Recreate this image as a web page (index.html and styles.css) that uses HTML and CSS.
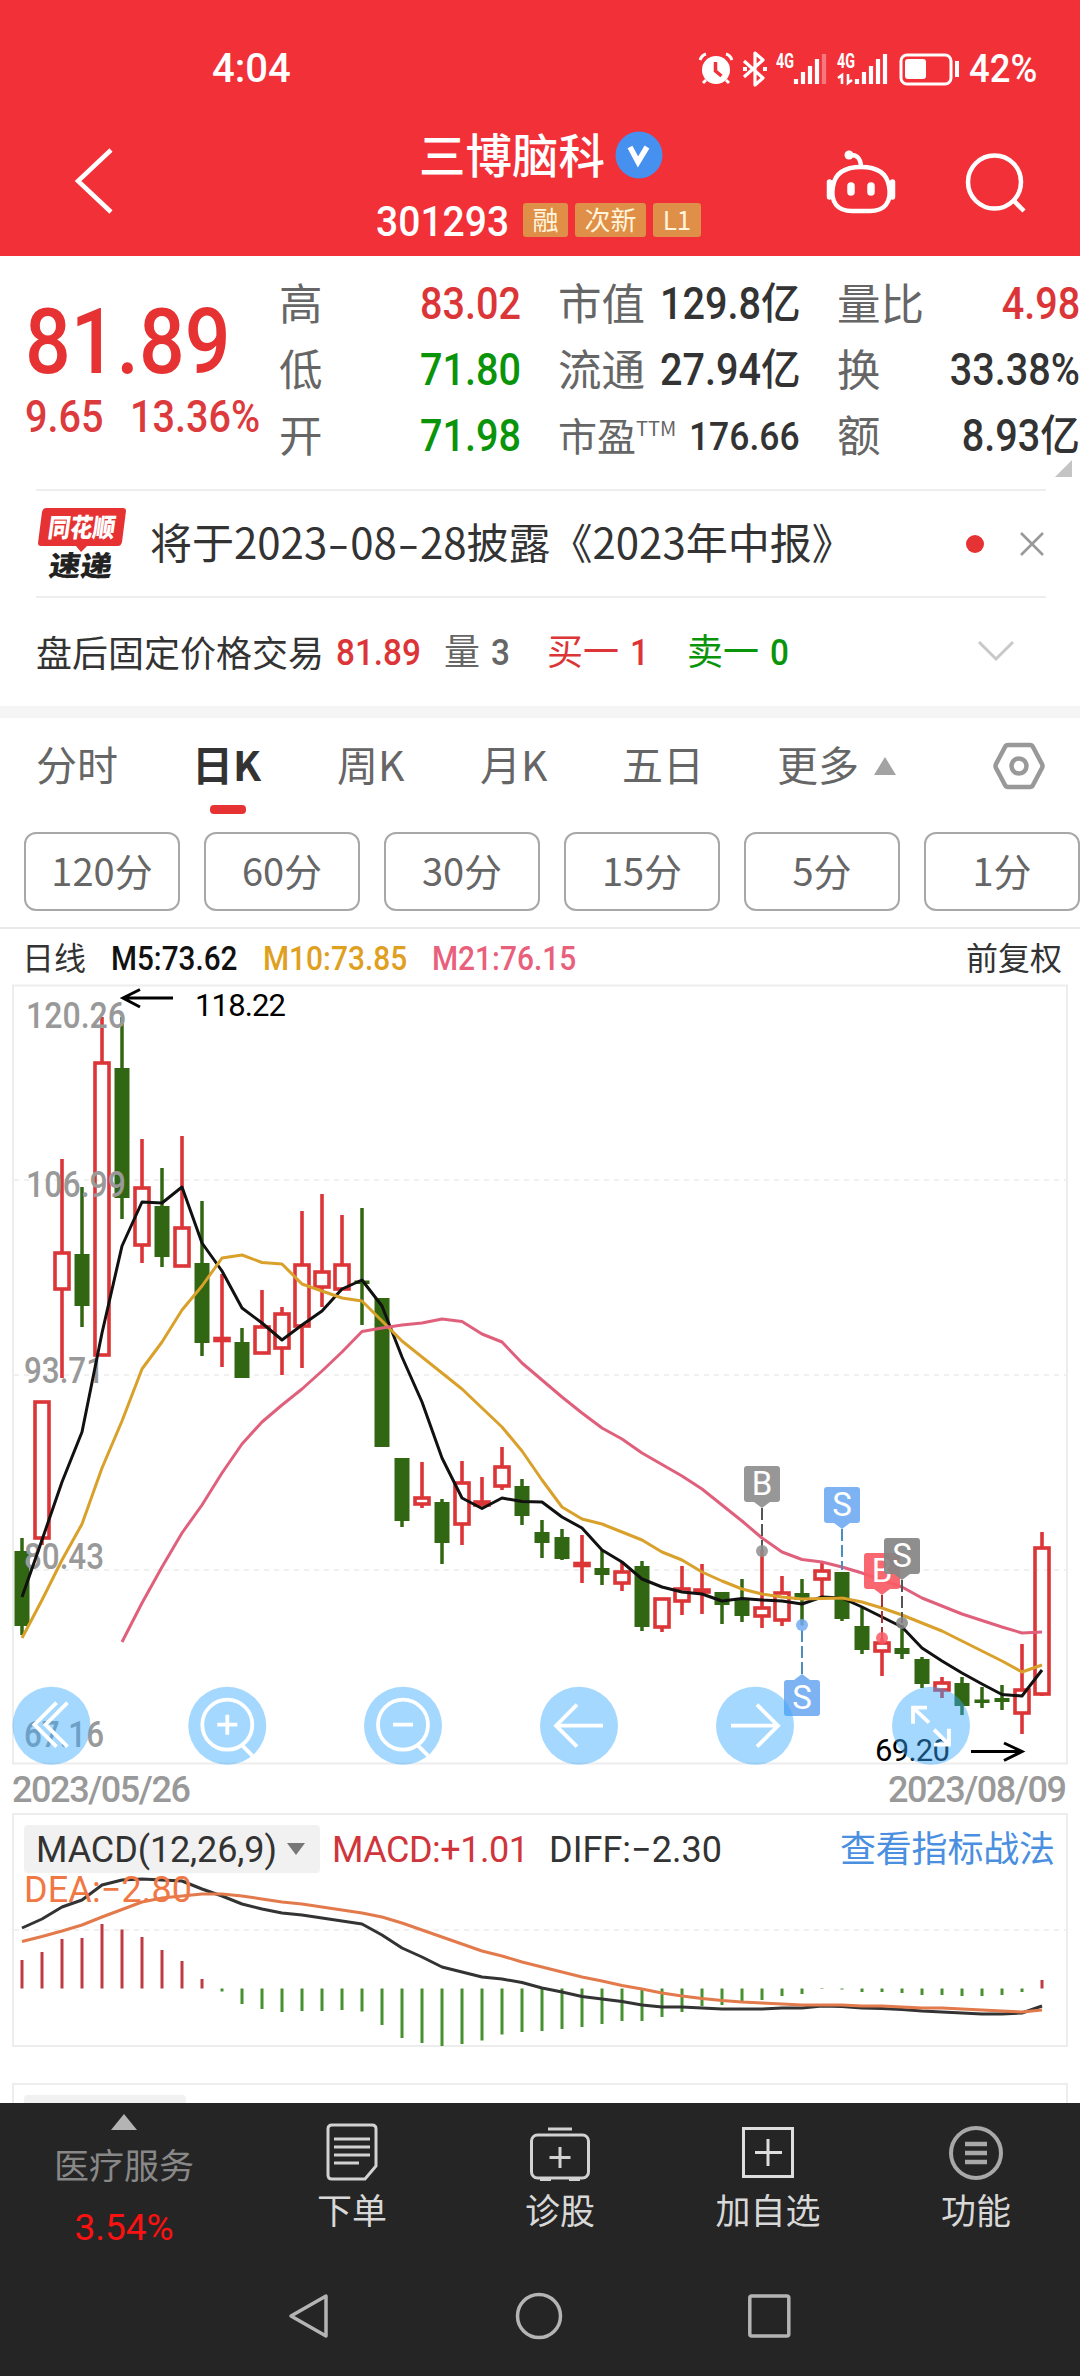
FILE: index.html
```
<!DOCTYPE html>
<html lang="zh-CN">
<head>
    <meta charset="UTF-8">
    <meta name="viewport" content="width=device-width, initial-scale=1.0">
    <title>三博脑科 301293</title>
    <link rel="stylesheet" href="styles.css">
</head>
<body>
    <header class="header">
        <div class="status-bar">
            <span class="clock num">4:04</span>
            <svg class="status-icons" width="262" height="36" viewBox="698 50 262 36" fill="none" stroke="#fff">
                <!-- alarm -->
                <circle cx="716" cy="69" r="14" fill="#fff" stroke="none"/>
                <path d="M715.500 61v9l6 5" stroke="#f13038" stroke-width="3.500"/>
                <path d="M700 59q2-5 6-6M732 59q-2-5-6-6M706 79l-3 3M726 79l3 3" stroke-width="3"/>
                <!-- bluetooth -->
                <path d="M744 60l19 17-8 7V52l8 7-19 17" stroke-width="3.200" stroke-linejoin="round"/>
                <path d="M743 68h4M763 68h4" stroke-width="4"/>
                <!-- signal 1 -->
                <text class="net" x="776" y="67" textLength="18" lengthAdjust="spacingAndGlyphs">4G</text>
                <path d="M796 78v5M803 71v12M810 65v18M817 58v25" stroke-width="4.200"/>
                <path d="M824 53v30" stroke-width="4.200" opacity=".35"/>
                <!-- signal 2 -->
                <text class="net" x="837" y="67" textLength="18" lengthAdjust="spacingAndGlyphs">4G</text>
                <path d="M838 77l4-3v9M848 73v9l4-3" stroke-width="2.600"/>
                <path d="M857 78v5M864 71v12M871 65v18M878 58v25M885 53v30" stroke-width="4.200"/>
                <!-- battery -->
                <rect x="901" y="54" width="50" height="29" rx="6" stroke-width="3"/>
                <rect x="905" y="58" width="21" height="20" rx="3" fill="#fff" stroke="none"/>
                <path d="M957 60v16" stroke-width="4"/>
            </svg>
            <span class="battery-text num">42%</span>
        </div>
        <div class="title-bar">
            <svg class="back" width="46" height="72" viewBox="0 0 46 72" fill="none" stroke="#fff" stroke-width="4.500">
                <path d="M41 5L8 36l33 31"/>
            </svg>
            <div class="title">
                <div class="title-name">
                    <span>三博脑科</span>
                    <svg width="48" height="48" viewBox="0 0 48 48">
                        <circle cx="24" cy="24" r="23.500" fill="#4690f0"/>
                        <path d="M15 16l8 15 9-15" fill="none" stroke="#fff" stroke-width="5.500"/>
                    </svg>
                </div>
                <div class="title-code">
                    <span class="code"><span class="num">301293</span></span>
                    <span class="tag tag-1">融</span>
                    <span class="tag tag-2">次新</span>
                    <span class="tag tag-3">L1</span>
                </div>
            </div>
            <svg class="robot" width="74" height="70" viewBox="824 147 74 70" fill="none" stroke="#fff" stroke-width="4.500">
                <path d="M861 166q-1-12-11-11"/>
                <circle cx="849" cy="155" r="4.500" fill="#fff" stroke="none"/>
                <path d="M861 167c17 0 26 7 28 19 3 17-5 25-19 25h-18c-14 0-22-8-19-25 2-12 11-19 28-19z"/>
                <path d="M829.500 182v15M892.500 182v15" stroke-width="5.500" stroke-linecap="round"/>
                <path d="M851 186v6M871 186v6" stroke-width="7.500" stroke-linecap="round"/>
            </svg>
            <svg class="search" width="66" height="66" viewBox="963 150 66 66" fill="none" stroke="#fff" stroke-width="4.500">
                <circle cx="994.500" cy="182" r="26.500"/>
                <path d="M1013 200l11 11"/>
            </svg>
        </div>
    </header>

    <section class="quote">
        <div class="price">
            <div class="price-now num">81.89</div>
            <div class="price-change"><span class="num">9.65</span><span class="num">13.36%</span></div>
        </div>
        <div class="stats">
            <div class="stat"><label>高</label><b class="num up">83.02</b></div>
            <div class="stat"><label>市值</label><b class="num">129.8亿</b></div>
            <div class="stat"><label>量比</label><b class="num up">4.98</b></div>
            <div class="stat"><label>低</label><b class="num down">71.80</b></div>
            <div class="stat"><label>流通</label><b class="num">27.94亿</b></div>
            <div class="stat"><label>换</label><b class="num">33.38%</b></div>
            <div class="stat"><label>开</label><b class="num down">71.98</b></div>
            <div class="stat stat-small"><label>市盈<sup>TTM</sup></label><b class="num">176.66</b></div>
            <div class="stat"><label>额</label><b class="num">8.93亿</b></div>
        </div>
        <i class="corner"></i>
    </section>

    <section class="news">
        <svg class="news-logo" width="92" height="76" viewBox="35 505 92 76">
            <path d="M45 507h77q3 0 3 3l-4 31q-1 4-4 4H86l-6 6-5-6H40q-3 0-3-3l4-31q1-4 4-4z" fill="#e63232"/>
            <text class="logo-top" transform="translate(46 536) skewX(-8)" textLength="67" lengthAdjust="spacingAndGlyphs">同花顺</text>
            <text class="logo-bottom" transform="translate(47 575) skewX(-8)" textLength="63" lengthAdjust="spacingAndGlyphs">速递</text>
        </svg>
        <p>将于2023<i>-</i>08<i>-</i>28披露《2023年中报》</p>
        <span class="dot"></span>
        <svg class="close" width="26" height="26" viewBox="0 0 26 26" stroke="#999" stroke-width="2.600"><path d="M2 2l22 22M24 2L2 24"/></svg>
    </section>

    <section class="after-hours">
        <span class="ah-name">盘后固定价格交易</span>
        <span class="ah-price up"><b class="num">81.89</b></span>
        <span class="ah-vol muted">量<b class="num">3</b></span>
        <span class="ah-buy up">买一<b class="num">1</b></span>
        <span class="ah-sell down">卖一<b class="num">0</b></span>
        <svg class="chevron" width="38" height="22" viewBox="0 0 38 22" fill="none" stroke="#c8c8c8" stroke-width="3"><path d="M2 2l17 17L36 2"/></svg>
    </section>

    <nav class="tabs">
        <a class="tab">分时</a>
        <a class="tab active">日K</a>
        <a class="tab">周K</a>
        <a class="tab">月K</a>
        <a class="tab">五日</a>
        <a class="tab">更多</a>
        <svg class="more" width="24" height="20" viewBox="0 0 24 20"><path d="M12 1l11 18H1z" fill="#a3a3a3"/></svg>
        <svg class="settings" width="52" height="50" viewBox="0 0 52 50" fill="none" stroke="#999" stroke-width="4.500">
            <path d="M15 4h22q2 0 3 2l9 17q1 2 0 4l-9 17q-1 2-3 2H15q-2 0-3-2L3 27q-1-2 0-4L12 6q1-2 3-2z"/>
            <circle cx="26" cy="25" r="7.500"/>
        </svg>
    </nav>

    <div class="periods">
        <button>120分</button>
        <button>60分</button>
        <button>30分</button>
        <button>15分</button>
        <button>5分</button>
        <button>1分</button>
    </div>

    <div class="ma-legend">
        <span class="ma-name">日线</span>
        <span class="ma-5"><b class="num">M5:73.62</b></span>
        <span class="ma-10"><b class="num">M10:73.85</b></span>
        <span class="ma-21"><b class="num">M21:76.15</b></span>
        <span class="adjust">前复权</span>
    </div>

    <svg class="kline" id="kline" width="1080" height="828" viewBox="0 984 1080 828">
        <rect class="frame" x="13" y="985.500" width="1054" height="778"/>
        <path class="grid" d="M14 1180H1066M14 1375H1066M14 1570H1066"/>
        <g id="candles"></g>
        <g class="axis">
            <text x="26" y="1028" textLength="100" lengthAdjust="spacingAndGlyphs">120.26</text>
            <text x="26" y="1197" textLength="100" lengthAdjust="spacingAndGlyphs">106.99</text>
            <text x="24" y="1383" textLength="80" lengthAdjust="spacingAndGlyphs">93.71</text>
            <text x="24" y="1569" textLength="80" lengthAdjust="spacingAndGlyphs">80.43</text>
            <text x="24" y="1747" textLength="80" lengthAdjust="spacingAndGlyphs">67.16</text>
        </g>
        <g id="averages"></g>
        <g class="extreme">
            <path d="M173 998H124M140 989.500L123 998l17 9"/>
            <text x="195" y="1016" textLength="91">118.22</text>
            <path d="M971 1751.500h50M1004 1743l18 8.500-18 9"/>
            <text x="875" y="1761" textLength="75">69.20</text>
        </g>
        <g id="signals"></g>
        <g class="tools">
            <g transform="translate(51.5 1725.7)"><circle r="39"/><path d="M5-23l-22 22 22 22M16-23L-6-1l22 22"/></g>
            <g transform="translate(227.3 1725.7)"><circle r="39"/><path d="M-10-1h20M0-11v20M15 20l10 10"/><circle class="lens" cy="-1" r="25"/></g>
            <g transform="translate(403 1725.7)"><circle r="39"/><path d="M-10-1h20M15 20l10 10"/><circle class="lens" cy="-1" r="25"/></g>
            <g transform="translate(579 1725.7)"><circle r="39"/><path d="M24 0h-47M-2-21L-23 0l21 21"/></g>
            <g transform="translate(755 1725.7)"><circle r="39"/><path d="M-24 0h47M2-21L23 0 2 21"/></g>
            <g transform="translate(931 1725.7)"><circle r="39"/><path d="M-2-3l-16-15M-18-2v-16h14M3 4l15 15M18 3v16H3"/></g>
        </g>
        <g class="axis">
            <text x="12" y="1802" textLength="179">2023/05/26</text>
            <text x="888" y="1802" textLength="179">2023/08/09</text>
        </g>
    </svg>

    <svg class="macd" id="macd" width="1080" height="291" viewBox="0 1812 1080 291">
        <rect class="frame" x="13" y="1814" width="1054" height="232"/>
        <path class="grid" d="M14 1930H1066"/>
        <rect class="chip" x="24" y="1825" width="296" height="48" rx="4"/>
        <path d="M287 1843h18l-9 12z" fill="#777"/>
        <g id="macd-bars"></g>
        <g id="macd-lines"></g>
        <g class="macd-text">
            <text x="36" y="1862" textLength="241" fill="#333">MACD(12,26,9)</text>
            <text x="332" y="1862" textLength="197" fill="#d0353c">MACD:+1.01</text>
            <text x="549" y="1862" textLength="173" fill="#333">DIFF:−2.30</text>
            <text x="24" y="1902" textLength="168" fill="#f07845">DEA:−2.80</text>
            <text class="link" x="840" y="1862" textLength="215">查看指标战法</text>
        </g>
        <rect class="frame" x="13" y="2084" width="1054" height="60"/>
        <rect class="chip" x="24" y="2095" width="162" height="48" rx="4"/>
    </svg>

    <footer class="footer">
        <div class="actions">
            <div class="sector">
                <svg width="26" height="16" viewBox="0 0 26 16"><path d="M13 0l13 16H0z" fill="#b4b4b4"/></svg>
                <span>医疗服务</span>
                <b class="num">3.54%</b>
            </div>
            <div class="action">
                <svg width="60" height="60" viewBox="0 0 60 60" fill="none" stroke="#d2d2d2" stroke-width="3">
                    <path d="M10 3h40q4 0 4 4v37L43 57H10q-4 0-4-4V7q0-4 4-4z"/>
                    <path d="M12 17h36M12 25h36M12 33h36M12 41h25"/>
                </svg>
                <span>下单</span>
            </div>
            <div class="action">
                <svg width="64" height="60" viewBox="0 0 64 60" fill="none" stroke="#d2d2d2" stroke-width="3">
                    <rect x="3.500" y="13" width="57" height="43" rx="6"/>
                    <path d="M20 7h24M12 57.500h11M41 57.500h11M32 25v21M21.500 35.500h21"/>
                </svg>
                <span>诊股</span>
            </div>
            <div class="action">
                <svg width="60" height="60" viewBox="0 0 60 60" fill="none" stroke="#dedede" stroke-width="3">
                    <rect x="5.500" y="6.500" width="49" height="48"/>
                    <path d="M30 17v27M17 30.500h27"/>
                </svg>
                <span>加自选</span>
            </div>
            <div class="action">
                <svg width="60" height="60" viewBox="0 0 60 60" fill="none" stroke="#a8a8a8" stroke-width="4">
                    <circle cx="30" cy="31" r="25"/>
                    <path d="M19 22h22M19 31h22M19 40h22" stroke-width="4.500"/>
                </svg>
                <span>功能</span>
            </div>
        </div>
        <div class="sysnav">
            <svg width="44" height="48" viewBox="0 0 44 48"><path d="M40 4v40L5 24z"/></svg>
            <svg width="48" height="48" viewBox="0 0 48 48"><circle cx="24" cy="24" r="21.500"/></svg>
            <svg width="44" height="48" viewBox="0 0 44 48"><rect x="1.800" y="4" width="39" height="40" rx="2"/></svg>
        </div>
    </footer>

    <script src="chart.js"></script>
</body>
</html>
```
FILE: styles.css
```
* {
    box-sizing: border-box;
}

body {
    margin: 0;
    width: 1080px;
    height: 2376px;
    overflow: hidden;
    background: #fff;
    color: #333;
    font-family: 'Noto Sans CJK SC', sans-serif;
    line-height: 1;
}

p {
    margin: 0;
}

svg {
    display: block;
    flex-shrink: 0;
}

/* narrow figures */
.num {
    display: inline-block;
    font-family: Roboto, 'Noto Sans CJK SC', sans-serif;
    font-weight: 500;
    transform: scaleX(.9);
    transform-origin: left;
}

.up {
    color: #dc3538;
}

.down {
    color: #0a940a;
}

.muted {
    color: #666;
}

/* header */

.header {
    height: 256px;
    background: #f13038;
    color: #fff;
}

.status-bar {
    display: flex;
    align-items: center;
    height: 120px;
    padding-top: 18px;
}

.clock {
    width: 486px;
    margin-left: 212px;
    font-size: 40px;
    transform: none;
}

.net {
    fill: #fff;
    stroke: none;
    font: 700 20px Roboto, sans-serif;
}

.battery-text {
    margin-left: 9px;
    font-size: 38px;
    white-space: nowrap;
    transform: scaleX(.96);
}

.title-bar {
    display: flex;
    height: 136px;
}

.back {
    margin: 25px 0 0 70px;
}

.title {
    width: 390px;
    margin-left: 260px;
}

.title-name {
    display: flex;
    align-items: center;
    gap: 10px;
    height: 70px;
    padding-left: 43px;
    font-size: 46.5px;
    font-weight: 500;
}

.title-name span {
    margin-top: -4px;
}

.title-code {
    display: flex;
    align-items: center;
    height: 60px;
}

.code {
    width: 147px;
    font-size: 42px;
}

.code .num {
    transform: scaleX(.93);
}

.tag {
    height: 34px;
    margin-right: 7px;
    border-radius: 3px;
    background: #df8f47;
    color: #fff5dc;
    font-size: 26px;
    line-height: 31px;
    text-align: center;
}

.tag-1 {
    width: 45px;
}

.tag-2 {
    width: 71px;
}

.tag-3 {
    width: 48px;
}

.robot {
    margin: 27px 0 0 58px;
}

.search {
    margin: 30px 0 0 65px;
}

/* quote */

.quote {
    position: relative;
    display: flex;
    height: 233px;
}

.price {
    width: 281px;
    padding: 41px 0 0 25px;
    color: #e63232;
}

.price-now {
    height: 91px;
    font-size: 91px;
    transform: scaleX(.885);
}

.price-change {
    display: flex;
    margin-top: 7px;
    color: #dc3a3c;
    font-size: 44px;
    white-space: nowrap;
}

.price-change .num:first-child {
    width: 105px;
}

.stats {
    display: grid;
    grid-template-columns: 240px 240px 241px;
    grid-auto-rows: 66px;
    column-gap: 39px;
    padding-top: 16px;
}

.stat {
    display: flex;
    align-items: center;
    justify-content: space-between;
    font-size: 43.5px;
    white-space: nowrap;
}

.stat label {
    margin: -6px 0 0 -2px;
    color: #666;
}

.stat .num {
    transform: scaleX(.91);
    transform-origin: right;
}

.stat-small {
    font-size: 39px;
}

.stat sup {
    font-size: 20px;
    vertical-align: 15px;
}

.corner {
    position: absolute;
    right: 8px;
    bottom: 12px;
    border-bottom: 17px solid #c4c4c4;
    border-left: 17px solid transparent;
}

/* news */

.news {
    display: flex;
    align-items: center;
    height: 109px;
    margin: 0 34px 0 36px;
    border-top: 2px solid #eee;
    border-bottom: 2px solid #eee;
}

.news-logo {
    overflow: visible;
}

.logo-top {
    fill: #fff;
    font-size: 26px;
    font-weight: 900;
}

.logo-bottom {
    fill: #222;
    font-size: 28px;
    font-weight: 900;
}

.news p {
    width: 812px;
    margin: -5px 0 0 22px;
    flex-shrink: 0;
    font-size: 42px;
    white-space: nowrap;
}

.news p i {
    display: inline-block;
    width: 23px;
    font-style: normal;
    text-align: center;
    transform: scaleX(1.5);
}

.dot {
    width: 18px;
    height: 18px;
    margin-left: 4px;
    flex-shrink: 0;
    border-radius: 50%;
    background: #e63232;
}

.close {
    margin-left: 35px;
}

/* after-hours */

.after-hours {
    display: flex;
    align-items: center;
    height: 120px;
    padding: 0 0 3px 36px;
    border-bottom: 12px solid #f5f5f5;
    font-size: 36px;
    white-space: nowrap;
}

.after-hours span {
    flex-shrink: 0;
}

.after-hours .num {
    font-size: 37px;
}

.ah-name {
    width: 300px;
}

.ah-price {
    width: 108px;
}

.ah-vol {
    width: 103px;
}

.ah-vol .num {
    margin-left: 11px;
}

.ah-buy,
.ah-sell {
    width: 140px;
}

.ah-buy .num,
.ah-sell .num {
    margin-left: 11px;
}

.chevron {
    margin-left: 150px;
}

/* tabs */

.tabs {
    display: flex;
    align-items: center;
    height: 96px;
    padding-left: 36px;
    color: #666;
    font-size: 41px;
}

.tab {
    position: relative;
    top: -3px;
    width: 82px;
    margin-right: 63px;
    flex-shrink: 0;
    white-space: nowrap;
}

.tab:nth-child(1) {
    margin-right: 74px;
}

.tab:nth-child(2) {
    margin-right: 79px;
}

.tab:nth-child(3) {
    margin-right: 61px;
}

.tab:nth-child(4) {
    margin-right: 60px;
}

.tab:nth-child(5) {
    margin-right: 73px;
}

.tab:nth-child(6) {
    margin-right: 14px;
}

.tab.active {
    width: 66px;
    color: #333;
    font-weight: 700;
}

.tab.active::after {
    content: '';
    position: absolute;
    left: 18px;
    bottom: -30px;
    width: 36px;
    height: 9px;
    border-radius: 4px;
    background: #e63232;
}

.settings {
    margin-left: 96px;
}

/* periods */

.periods {
    display: flex;
    gap: 24px;
    height: 115px;
    padding: 18px 0 0 24px;
    border-bottom: 2px solid #e8e8e8;
}

.periods button {
    width: 156px;
    height: 79px;
    flex-shrink: 0;
    padding: 0 0 5px;
    border: 2px solid #a8a8a8;
    border-radius: 12px;
    background: #fff;
    color: #666;
    font-family: inherit;
    font-size: 38px;
}

/* moving averages */

.ma-legend {
    display: flex;
    align-items: center;
    height: 55px;
    padding: 2px 18px 0 22px;
    font-size: 33px;
    white-space: nowrap;
}

.ma-name,
.adjust {
    margin-top: -4px;
    font-size: 32px;
}

.ma-5 {
    width: 152px;
    margin-left: 25px;
    color: #111;
}

.ma-10 {
    width: 169px;
    color: #dfa01f;
}

.ma-21 {
    color: #e8607c;
}

.ma-10 .num,
.ma-21 .num {
    transform: scaleX(.905);
}

.adjust {
    margin-left: auto;
}

.frame {
    fill: none;
    stroke: #ededed;
    stroke-width: 2;
}

.grid {
    stroke: #ececec;
    stroke-width: 1.5;
    stroke-dasharray: 5 5;
}

.axis text {
    fill: #999;
    font: 500 36px Roboto, sans-serif;
}

.bar {
    stroke-width: 3;
}

.candle-up {
    fill: none;
    stroke: #dc3538;
    stroke-width: 3.6;
}

.candle-down {
    fill: #316613;
    stroke: #316613;
    stroke-width: 3;
}

.line {
    fill: none;
    stroke-width: 3;
    stroke-linejoin: round;
}

.extreme path {
    fill: none;
    stroke: #000;
    stroke-width: 3;
}

.extreme text {
    font: 400 31px Roboto, sans-serif;
}

.signal text {
    fill: #fff;
    font: 400 33px Roboto, sans-serif;
    text-anchor: middle;
}

.tools circle {
    fill: rgba(55, 168, 253, .45);
}

.tools path,
.tools .lens {
    fill: none;
    stroke: #fff;
    stroke-width: 3.8;
}

/* macd */

.chip {
    fill: #f1f1f1;
}

.macd-text text {
    font: 400 36px Roboto, sans-serif;
}

.macd-text .link {
    fill: #4a8fe0;
    font: 400 36px 'Noto Sans CJK SC', sans-serif;
}

/* footer */

.footer {
    position: relative;
    height: 273px;
    background: #252525;
    color: #d8d8d8;
    font-size: 35px;
}

.actions {
    display: flex;
    height: 172px;
}

.sector {
    display: flex;
    flex-direction: column;
    align-items: center;
    width: 248px;
    padding-top: 11px;
    color: #888;
}

.sector span {
    margin-top: 16px;
}

.sector b {
    margin-top: 28px;
    color: #fa1111;
    font-size: 37px;
    font-weight: 400;
    transform: none;
}

.action {
    display: flex;
    flex-direction: column;
    align-items: center;
    width: 208px;
    padding-top: 19px;
}

.action span {
    margin-top: 9px;
}

.sysnav {
    display: flex;
    height: 101px;
    padding: 17px 0 0 286px;
    fill: none;
    stroke: #b4b4b4;
    stroke-width: 3.5;
    stroke-linejoin: round;
}

.sysnav svg {
    margin-right: 185px;
}
```
FILE: chart.js
```
const STEP = 20;
const LEFT = 22;
const x = i => LEFT + i * STEP;

// [direction, high, body top, body bottom, low]
const candles = [
    ['d', 1538, 1551, 1626, 1635], ['u', 1402, 1402, 1538, 1545], ['u', 1159, 1253, 1289, 1378],
    ['d', 1187, 1254, 1306, 1327], ['u', 1017, 1063, 1355, 1355], ['d', 1017, 1068, 1198, 1219],
    ['u', 1139, 1188, 1245, 1263], ['d', 1168, 1206, 1257, 1267], ['u', 1136, 1228, 1266, 1266],
    ['d', 1201, 1263, 1343, 1356], ['u', 1274, 1338.5, 1340.5, 1367], ['d', 1328, 1342, 1378, 1378],
    ['u', 1290, 1327, 1353, 1353], ['u', 1307, 1314, 1348, 1375], ['u', 1211, 1265, 1326, 1368],
    ['u', 1194, 1272, 1287, 1307], ['u', 1215, 1265, 1289, 1289], ['d', 1208, 1281, 1283, 1325],
    ['d', 1298, 1298, 1447, 1447], ['d', 1458, 1458, 1521, 1527], ['u', 1462, 1498, 1504, 1508],
    ['d', 1499, 1502, 1543, 1564], ['u', 1461, 1483, 1524, 1545], ['u', 1477, 1502, 1505, 1505],
    ['u', 1447, 1467, 1486, 1490], ['d', 1479, 1486, 1516, 1525], ['d', 1520, 1532, 1543, 1558],
    ['d', 1529, 1537, 1559, 1560], ['u', 1535, 1563.5, 1565.5, 1583], ['d', 1550, 1568, 1575, 1585],
    ['u', 1562, 1572, 1583, 1591], ['d', 1561, 1566, 1627, 1631], ['u', 1599, 1599, 1627, 1632],
    ['u', 1566, 1589, 1601, 1615], ['u', 1564, 1590, 1592, 1614], ['d', 1592, 1592, 1605, 1624],
    ['d', 1579, 1599, 1616, 1622], ['u', 1550, 1608, 1616, 1628], ['u', 1576, 1593, 1620, 1626],
    ['d', 1579, 1593, 1600, 1625], ['u', 1561, 1571, 1579, 1596], ['d', 1572, 1572, 1619, 1621],
    ['d', 1608, 1626, 1650, 1654], ['u', 1638, 1643, 1651, 1676], ['d', 1625, 1648, 1654, 1659],
    ['d', 1657, 1659, 1684, 1688], ['u', 1677, 1683, 1690, 1698], ['d', 1677, 1683, 1706, 1715],
    ['d', 1687, 1700, 1702, 1708], ['d', 1685, 1698, 1702, 1710], ['u', 1644, 1690, 1713, 1734],
    ['u', 1532, 1548, 1694, 1696]
];

const ma5 = [1597, 1540, 1482, 1432, 1333, 1246, 1202, 1203, 1187, 1243, 1271, 1308, 1323, 1340, 1325, 1311, 1289, 1280,
    1306, 1357, 1402, 1458, 1498, 1508.5, 1498, 1501.5, 1502, 1517, 1528, 1550, 1562, 1579, 1587, 1592, 1594, 1601,
    1598.5, 1600, 1601, 1604, 1597, 1598, 1607, 1617, 1627, 1648, 1661, 1673, 1684, 1694.5, 1696, 1670];
const ma10 = [1638, 1600, 1560, 1524, 1468, 1421, 1369, 1342, 1310, 1286, 1258, 1255, 1262.5, 1264, 1284, 1291, 1298, 1301,
    1321, 1341, 1357, 1373, 1389, 1408, 1427, 1451, 1480, 1507, 1519, 1524, 1532, 1540, 1552, 1560, 1572, 1581,
    1589, 1594, 1597, 1599, 1598.5, 1598, 1602, 1608, 1615, 1623, 1631, 1641, 1651, 1661, 1672, 1665];
const ma21 = [1642, 1603, 1567, 1533, 1505, 1473, 1444, 1422, 1405, 1389, 1371, 1352, 1331.5, 1328, 1325, 1323, 1319,
    1321.5, 1334, 1342, 1363, 1380, 1397, 1413, 1428, 1439, 1453, 1464.5, 1476, 1489, 1505, 1521, 1538, 1552,
    1559.5, 1562, 1567, 1573, 1580, 1587, 1598, 1606, 1614, 1620.5, 1627, 1633, 1632];

// buy and sell flags; dot is the price point, top is the upper edge of the flag
const signals = [
    { i: 37, text: 'B', top: 1466, dot: 1551, color: '#8f8f8f', line: '#555' },
    { i: 41, text: 'S', top: 1487, dot: 1570, color: '#73adf2', line: '#4a8ec0', bare: true },
    { i: 43, text: 'B', top: 1553, dot: 1638, color: '#f95c66', line: '#a33' },
    { i: 44, text: 'S', top: 1538, dot: 1623, color: '#858585', line: '#555' },
    { i: 39, text: 'S', top: 1680, dot: 1625, color: '#73adf2', line: '#4a8ec0' }
];

const macdBars = [1960, 1952, 1939, 1938, 1924, 1929.5, 1937, 1950, 1961, 1979, 1991.5, 2004, 2009, 2012, 2011, 2011,
    2010, 2011.5, 2025, 2038, 2043, 2046, 2044, 2040.5, 2034.5, 2032, 2031, 2029, 2027, 2024, 2021, 2021, 2017, 2012,
    2006, 2005, 2001, 2000, 1996, 1994, 1989, 1989.5, 1992, 1992, 1993, 1995, 1995, 1996, 1996, 1995, 1992, 1980];
const diff = [1928, 1919, 1907, 1900, 1885, 1880, 1879, 1880, 1881, 1889, 1896, 1904, 1909, 1913, 1915, 1918, 1921, 1924,
    1935, 1948, 1957, 1967, 1972, 1977, 1979, 1982.5, 1988, 1992, 1996.5, 1999, 2001.5, 2005, 2007, 2007, 2008, 2009,
    2009, 2009, 2008, 2008, 2006, 2006.5, 2008, 2008.5, 2009.5, 2011, 2012, 2013, 2014, 2014, 2013, 2006];
const dea = [1941.5, 1936.5, 1931, 1925, 1917, 1909.5, 1902, 1898, 1896, 1894, 1894, 1896, 1899, 1902, 1904, 1907, 1910,
    1913, 1917, 1923, 1930, 1937, 1944, 1951, 1956, 1962, 1967, 1972, 1977, 1981, 1985.5, 1989, 1993, 1996, 1998.5,
    2000.5, 2002, 2003, 2004, 2005, 2005, 2005, 2006, 2006, 2007, 2008, 2008, 2009, 2010, 2011, 2012, 2010];

function polyline(values, color, start = 0) {
    const points = values.map((y, i) => `${x(i + start)},${y}`).join(' ');
    return `<polyline class="line" points="${points}" stroke="${color}"/>`;
}

document.getElementById('candles').innerHTML = candles.map(([dir, high, top, bottom, low], i) => {
    const cls = dir === 'u' ? 'candle-up' : 'candle-down';
    const half = dir === 'u' ? 7 : 6;
    const inset = dir === 'u' ? 0 : Math.min(1.5, (bottom - top) / 2);
    return `<path class="${cls}" d="M${x(i)} ${high}V${top}M${x(i)} ${bottom}V${low}"/>
        <rect class="${cls}" x="${x(i) - half}" y="${top + inset}" width="${half * 2}" height="${Math.max(bottom - top - inset * 2, 0.5)}"/>`
        + (dir === 'd' ? `<path class="${cls}" d="M${x(i)} ${high}V${low}"/>` : '');
}).join('');

document.getElementById('averages').innerHTML =
    polyline(ma5, '#111') + polyline(ma10, '#d9a02a') + polyline(ma21, '#e0607c', 5);

document.getElementById('signals').innerHTML = signals.map(s => {
    const cx = x(s.i);
    const below = s.top > s.dot;
    const edge = below ? s.top : s.top + 36;
    const tip = below ? edge - 6 : edge + 6;
    return `<g class="signal">
        <path d="M${cx} ${tip}V${s.dot}" stroke="${s.line}" stroke-width="2" stroke-dasharray="12 4"/>
        ${s.bare ? '' : `<circle cx="${cx}" cy="${s.dot}" r="6" fill="${s.color}" opacity=".85"/>`}
        <g opacity=".92">
            <rect x="${cx - 18}" y="${s.top}" width="36" height="36" rx="3" fill="${s.color}"/>
            <path d="M${cx - 8} ${edge}L${cx} ${tip}L${cx + 8} ${edge}z" fill="${s.color}"/>
        </g>
        <text x="${cx}" y="${s.top + 29}">${s.text}</text>
    </g>`;
}).join('');

document.getElementById('macd-bars').innerHTML = macdBars.map((y, i) =>
    `<path class="bar" d="M${x(i)} 1988.5V${y}" stroke="${y < 1988 ? '#bf3a42' : '#45912f'}"/>`
).join('');

document.getElementById('macd-lines').innerHTML = polyline(diff, '#333') + polyline(dea, '#e27a4c');
```
